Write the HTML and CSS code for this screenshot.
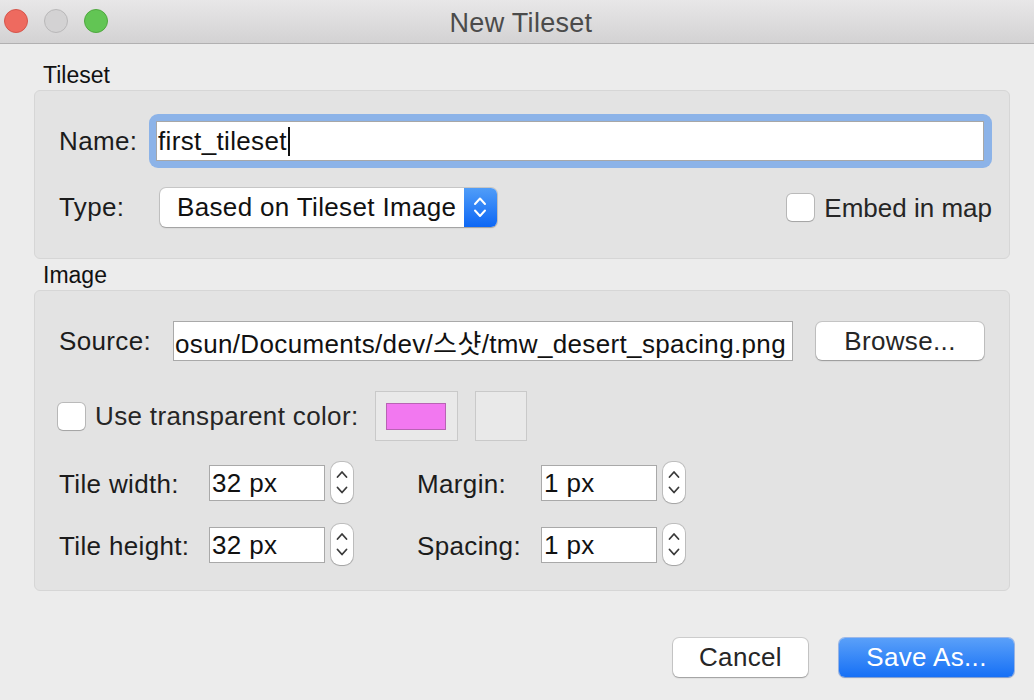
FILE: index.html
```html
<!DOCTYPE html>
<html lang="en">
<head>
<meta charset="utf-8">
<title>New Tileset</title>
<link rel="stylesheet" href="styles.css">
</head>
<body>
<div class="window">
  <div class="titlebar">
    <div class="lights">
      <span class="light red"></span>
      <span class="light gray"></span>
      <span class="light green"></span>
    </div>
    <div class="title">New Tileset</div>
    <div></div>
  </div>

  <div class="content">
    <div class="section-label first">Tileset</div>
    <div class="group group-tileset">
      <div class="row row-name">
        <span class="lbl lbl-name">Name:</span>
        <div class="focus-ring">
          <div class="text-field"><span>first_tileset</span><span class="caret"></span></div>
        </div>
      </div>
      <div class="row row-type">
        <span class="lbl lbl-type">Type:</span>
        <div class="combo">
          <span class="combo-text">Based on Tileset Image</span>
          <span class="combo-arrows">
            <svg width="33" height="39" viewBox="0 0 33 39"><path d="M11 16 L16 10.5 L21 16 M11 22.5 L16 28 L21 22.5" fill="none" stroke="#fff" stroke-width="2" stroke-linecap="round" stroke-linejoin="round"/></svg>
          </span>
        </div>
        <div class="spacer"></div>
        <span class="checkbox"></span>
        <span class="check-label embed">Embed in map</span>
      </div>
    </div>

    <div class="section-label">Image</div>
    <div class="group group-image">
      <div class="row row-source">
        <span class="lbl lbl-source">Source:</span>
        <div class="path-field"><span>osun/Documents/dev/스샷/tmw_desert_spacing.png</span></div>
        <div class="button browse">Browse...</div>
      </div>
      <div class="row row-trans">
        <span class="checkbox"></span>
        <span class="check-label">Use transparent color:</span>
        <div class="color-btn"><span class="swatch"></span></div>
        <div class="color-btn empty"></div>
      </div>
      <div class="spin-grid">
        <span class="lbl">Tile width:</span>
        <div class="spin-field">32 px</div>
        <div class="stepper"><svg width="22" height="41" viewBox="0 0 22 41"><path d="M6.5 15 L11 10 L15.5 15 M6.5 25.5 L11 30.5 L15.5 25.5" fill="none" stroke="#3a3a3a" stroke-width="1.8" stroke-linecap="round" stroke-linejoin="round"/></svg></div>
        <span class="lbl lbl-right">Margin:</span>
        <div class="spin-field">1 px</div>
        <div class="stepper"><svg width="22" height="41" viewBox="0 0 22 41"><path d="M6.5 15 L11 10 L15.5 15 M6.5 25.5 L11 30.5 L15.5 25.5" fill="none" stroke="#3a3a3a" stroke-width="1.8" stroke-linecap="round" stroke-linejoin="round"/></svg></div>

        <span class="lbl">Tile height:</span>
        <div class="spin-field">32 px</div>
        <div class="stepper"><svg width="22" height="41" viewBox="0 0 22 41"><path d="M6.5 15 L11 10 L15.5 15 M6.5 25.5 L11 30.5 L15.5 25.5" fill="none" stroke="#3a3a3a" stroke-width="1.8" stroke-linecap="round" stroke-linejoin="round"/></svg></div>
        <span class="lbl lbl-right">Spacing:</span>
        <div class="spin-field">1 px</div>
        <div class="stepper"><svg width="22" height="41" viewBox="0 0 22 41"><path d="M6.5 15 L11 10 L15.5 15 M6.5 25.5 L11 30.5 L15.5 25.5" fill="none" stroke="#3a3a3a" stroke-width="1.8" stroke-linecap="round" stroke-linejoin="round"/></svg></div>
      </div>
    </div>

    <div class="footer">
      <div class="button cancel">Cancel</div>
      <div class="button primary">Save As...</div>
    </div>
  </div>
</div>
</body>
</html>
```

FILE: styles.css
```css
* { box-sizing: border-box; }

html, body {
  margin: 0;
  padding: 0;
  width: 1034px;
  height: 700px;
  overflow: hidden;
  background: #ececec;
  font-family: "Liberation Sans", Arial, "Noto Sans CJK KR", sans-serif;
  color: #1c1c1c;
}

.window {
  width: 1034px;
  height: 700px;
  display: flex;
  flex-direction: column;
}

/* Title bar */
.titlebar {
  height: 44px;
  flex: none;
  display: grid;
  grid-template-columns: 1fr auto 1fr;
  align-items: center;
  padding-left: 4px;
  background: linear-gradient(#e8e7e8, #d3d2d3);
  border-bottom: 1px solid #b1b0b1;
}

.lights {
  display: flex;
  gap: 16px;
  align-items: center;
  margin-top: -1px;
}

.light {
  width: 24px;
  height: 24px;
  border-radius: 50%;
  display: block;
}
.light.red { background: #ee6a5f; border: 1px solid #d5554b; }
.light.gray { background: #d3d2d3; border: 1px solid #b9b8b9; }
.light.green { background: #62c554; border: 1px solid #4fa83f; }

.title {
  font-size: 27px;
  letter-spacing: 0.3px;
  color: #4b4b4b;
  padding-left: 4px;
  padding-top: 3px;
}

/* Content */
.content {
  flex: 1;
  display: flex;
  flex-direction: column;
  padding: 0 24px 23px 34px;
}

.section-label {
  font-size: 23px;
  line-height: 26px;
  margin: 3px 0 2px 9px;
  color: #111;
}
.section-label.first { margin-top: 18px; }

.group {
  background: #e3e3e3;
  border: 1px solid #d6d6d6;
  border-radius: 6px;
}

.group-tileset {
  height: 169px;
  padding: 23px 17px 0 24px;
}

.group-image {
  height: 301px;
  padding: 30px 25px 0 24px;
}

.row {
  display: flex;
  align-items: center;
}

.lbl,
.check-label,
.combo-text,
.text-field,
.path-field,
.button,
.spin-field {
  letter-spacing: 0.35px;
}

.lbl {
  font-size: 26px;
  color: #1c1c1c;
  white-space: nowrap;
}

.lbl-name { width: 90px; }
.lbl-type { width: 101px; }
.lbl-source { width: 114px; }

/* Name field with focus ring */
.row-name { height: 54px; }

.focus-ring {
  flex: 1;
  background: #8cb3e8;
  border-radius: 9px;
  padding: 7px 8px 7px 7px;
}

.text-field {
  height: 40px;
  background: #fff;
  border: 1px solid #a7a7a7;
  display: flex;
  align-items: center;
  padding-left: 1px;
  font-size: 26px;
  color: #111;
}

.caret {
  display: inline-block;
  width: 2px;
  height: 29px;
  background: #111;
  margin-left: 1px;
}

/* Type row */
.row-type {
  height: 39px;
  margin-top: 20px;
}

.combo {
  width: 337px;
  height: 39px;
  display: flex;
  align-items: center;
  background: #fff;
  border-radius: 6px;
  box-shadow: 0 0 0 1px rgba(0,0,0,0.12), 0 1px 1.5px rgba(0,0,0,0.22);
  overflow: hidden;
}

.combo-text {
  flex: 1;
  padding-left: 17px;
  font-size: 26px;
  color: #111;
  white-space: nowrap;
}

.combo-arrows {
  width: 33px;
  height: 39px;
  display: block;
  background: linear-gradient(#509df8, #0d67f5);
}
.combo-arrows svg { display: block; }

.spacer { flex: 1; }

.checkbox {
  width: 27px;
  height: 27px;
  flex: none;
  background: #fff;
  border-radius: 5px;
  box-shadow: 0 0 0 1px rgba(0,0,0,0.18), 0 1px 1px rgba(0,0,0,0.12);
  display: block;
}

.check-label {
  font-size: 26px;
  color: #262626;
  margin-left: 10px;
  white-space: nowrap;
}

.check-label.embed { letter-spacing: 0; padding-top: 2px; }

/* Source row */
.row-source { height: 40px; }

.path-field {
  width: 620px;
  height: 40px;
  background: #fff;
  border: 1px solid #a9a9a9;
  display: flex;
  justify-content: flex-end;
  align-items: center;
  overflow: hidden;
  padding-right: 6px;
  font-size: 26px;
  color: #111;
  white-space: nowrap;
}

.button {
  height: 39px;
  display: flex;
  align-items: center;
  justify-content: center;
  font-size: 26px;
  color: #262626;
  background: #fff;
  border-radius: 6px;
  box-shadow: 0 0 0 1px rgba(0,0,0,0.13), 0 1px 1.5px rgba(0,0,0,0.24);
}

.browse {
  width: 168px;
  height: 38px;
  margin-left: 23px;
}

/* Transparent color row */
.row-trans {
  height: 50px;
  margin-top: 30px;
}

.row-trans .checkbox { margin-left: -1px; }

.color-btn {
  width: 83px;
  height: 50px;
  margin-left: 16px;
  background: #e9e9e9;
  border: 1px solid #c9c9c9;
  display: flex;
  align-items: center;
  justify-content: center;
}

.color-btn.empty {
  width: 52px;
  margin-left: 17px;
}

.swatch {
  width: 60px;
  height: 27px;
  background: #f278f0;
  border: 1px solid #b863b4;
  display: block;
}

/* Spin grid */
.spin-grid {
  margin-top: 21px;
  display: grid;
  grid-template-columns: 150px 116px 28px 188px 116px 29px;
  grid-auto-rows: 41px;
  row-gap: 21px;
  align-items: center;
}

.spin-grid .lbl { padding-top: 3px; }
.spin-grid .stepper { margin-left: 6px; }
.spin-grid .lbl-right { margin-left: 64px; }

.spin-field {
  height: 36px;
  background: #fff;
  border: 1px solid #a9a9a9;
  display: flex;
  align-items: center;
  padding-left: 2px;
  padding-top: 2px;
  font-size: 26px;
  color: #111;
}

.stepper {
  width: 22px;
  height: 41px;
  background: #fff;
  border-radius: 9px;
  box-shadow: 0 0 0 1px rgba(0,0,0,0.16), 0 1px 1px rgba(0,0,0,0.14);
}
.stepper svg { display: block; }

/* Footer */
.footer {
  margin-top: auto;
  display: flex;
  justify-content: flex-end;
  gap: 31px;
  margin-right: -4px;
}

.cancel { width: 135px; }

.primary {
  width: 175px;
  color: #fff;
  background: linear-gradient(#5aa0f9, #1670f6);
  box-shadow: 0 0 0 1px rgba(10,90,230,0.35), 0 1px 1.5px rgba(0,0,0,0.2);
}
```
